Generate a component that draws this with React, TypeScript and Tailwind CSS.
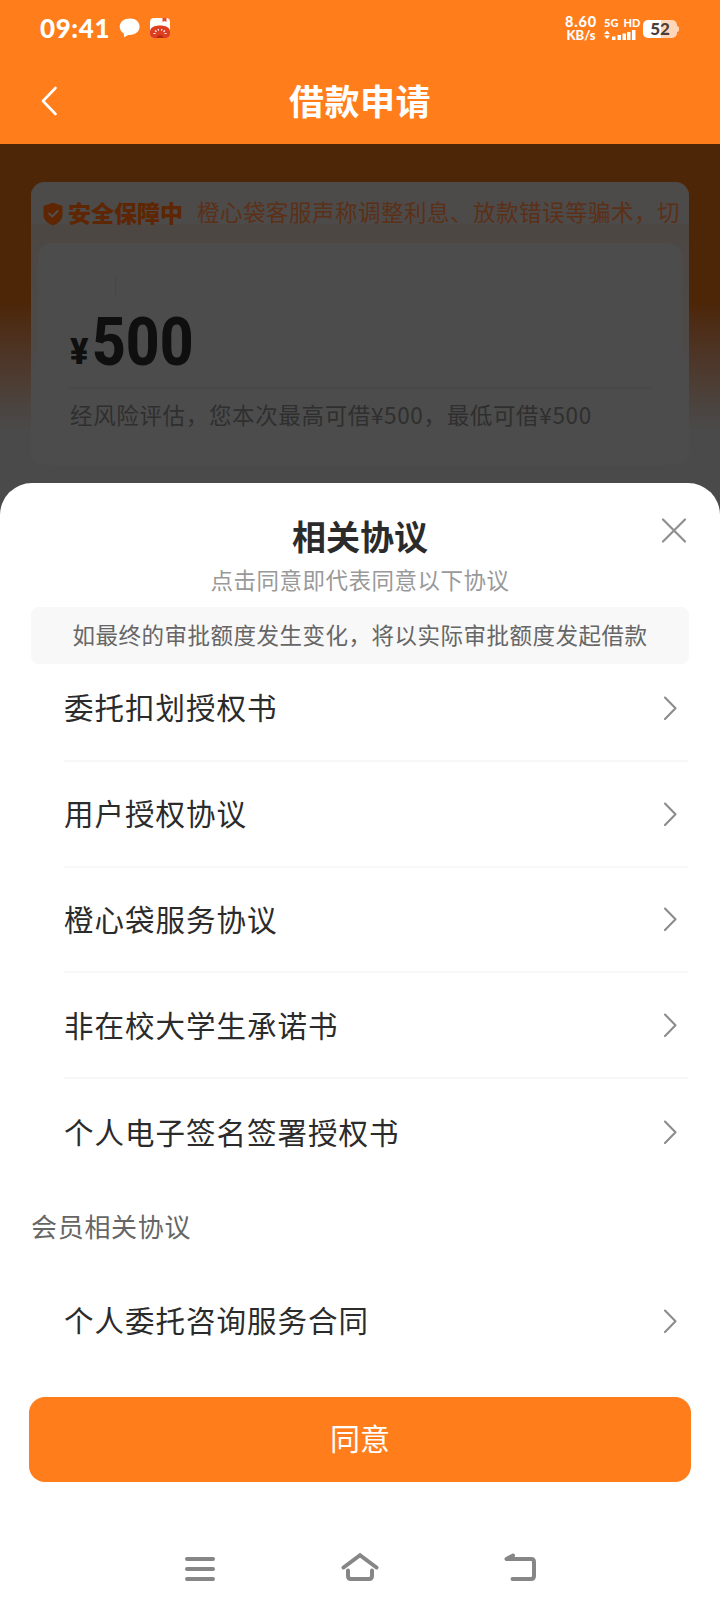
import React from "react";

const CJK = "font-['Noto_Sans_CJK_SC',sans-serif]";

function Chevron() {
  return (
    <svg className="h-6 w-4 shrink-0" viewBox="0 0 16 24" fill="none" stroke="#8c8c8c" strokeWidth="2.1" strokeLinecap="round" strokeLinejoin="round">
      <path d="M2 1.500 12.500 12.300 2 23" />
    </svg>
  );
}

function Row({ label, divider }: { label: string; divider?: boolean }) {
  return (
    <div className={`flex h-[105.8px] shrink-0 items-center justify-between pr-[9px] ${divider ? "border-b-2 border-[#f7f7f7]" : ""}`}>
      <span className="pb-[3px] text-[29.5px] leading-[44px] tracking-[1px] text-[#2b2b2b]">{label}</span>
      <Chevron />
    </div>
  );
}

function StatusBar() {
  return (
    <div className="flex h-14 items-center justify-between pl-[40px] pr-[41px] text-white">
      <div className="flex items-center">
        <span className="w-[79px] whitespace-nowrap font-['Lato',sans-serif] text-[26px] font-black leading-[30px] tracking-[0.6px]">09:41</span>
        <svg className="h-5 w-[22px]" viewBox="0 0 22 20" fill="#fff">
          <path d="M11 .5C5 .5.7 4 .7 8.700c0 3 1.700 5.300 4.200 6.700L5 19.300l4.300-2.400c6.500.6 11.300-3.200 11.300-8.200C20.600 4 16.800.5 11 .5Z" />
        </svg>
        <svg className="ml-[9px] h-5 w-5" viewBox="0 0 20 20">
          <rect width="20" height="20" rx="4" fill="#fff" />
          <path d="M12.500 0h4v4l-2-1-2 1Z" fill="#e64a2e" />
          <path d="M0 13.500C0 9.500 4.500 7.500 10 7.500s10 2 10 6V16a4 4 0 0 1-4 4H4a4 4 0 0 1-4-4Z" fill="#df3d20" />
          <path d="m5 12.500 1.500 1.200M8 11l.6 1.600M12 11l-.6 1.600M15 12.500l-1.500 1.200M3.500 15.500h2M16.500 15.500h-2" stroke="#fff" strokeWidth="1.200" fill="none" />
          <path d="M6 20q4-6 8 0Z" fill="#b92a12" />
        </svg>
      </div>
      <div className="flex items-center pt-[1px]">
        <div className="w-[34px] text-center font-['Lato',sans-serif] font-black">
          <div className="whitespace-nowrap text-[14.5px] leading-[14px] tracking-[0.8px]">8.60</div>
          <div className="whitespace-nowrap text-[13px] leading-[13px]">KB/s</div>
        </div>
        <div className="ml-[6px] w-8">
          <div className="whitespace-nowrap font-['Lato',sans-serif] text-[11px] font-black leading-[11px]">5G&nbsp; HD</div>
          <svg className="mt-px h-3 w-8" viewBox="0 0 32 12" fill="#fff">
            <path d="M0 5h6L3 1.500ZM0 6.500h6L3 10ZM8 7.500h3.500V11H8ZM13.500 6H17v5h-3.500ZM18.500 4.500H22V11h-3.500ZM23 3h3.500v8H23ZM28 1h3.500v10H28Z" />
          </svg>
        </div>
        <div className="ml-[7px] flex items-center">
          <div className="flex h-[18px] w-[34px] items-center justify-center rounded-[5px] bg-linear-to-r from-white from-52% to-[#ffd6b8] to-52%">
            <span className="font-['Lato',sans-serif] text-[17px] font-black leading-[18px] text-[#4a4038]">52</span>
          </div>
          <div className="h-[6px] w-[2px] rounded-r bg-[#ffd6b8]" />
        </div>
      </div>
    </div>
  );
}

function LoanCard() {
  return (
    <div className="h-[283px] overflow-hidden rounded-[14px] bg-linear-to-b from-[#4d4744] from-20% to-[#4c4c4c] to-75% px-[7px]">
      <div className="-mx-[7px] flex h-[42px] items-end bg-[#4d4a4a] pl-[12px]">
        <svg className="mb-[-2px] mr-[5px] h-6 w-5 shrink-0" viewBox="0 0 20 24" fill="none">
          <path d="M10 .8 19.500 4v8.500c0 5.500-4 8.800-9.500 11C4.500 21.300.5 18 .5 12.500V4Z" fill="#5e2602" />
          <path d="m5.500 11 3.700 3.500 6-6" stroke="#55504e" strokeWidth="1.800" />
        </svg>
        <span className="-mb-[5px] w-[129px] shrink-0 whitespace-nowrap text-[23px] font-black leading-[34px] text-[#5e2602]">安全保障中</span>
        <span className="-mb-[4px] whitespace-nowrap text-[22.500px] leading-[34px] tracking-[0.5px] text-[#5c3016]">橙心袋客服声称调整利息、放款错误等骗术，切</span>
      </div>
      <div className="mt-[19px] flex h-[222px] flex-col rounded-[14px] bg-[#4c4c4c] px-8">
        <div className="ml-[45px] mt-[33px] h-[22px] w-px bg-[#474747]" />
        <div className="mt-[9px] flex h-[82px] items-end border-b-2 border-[#484848] text-[#0f0f0f]">
          <span className="mb-[14px] w-[22px] font-['Roboto',sans-serif] text-[36px] font-black leading-[42px]">
            <span className="block origin-left scale-x-[0.95]">¥</span>
          </span>
          <span className="mb-[11px] origin-left scale-x-[0.890] font-['Roboto',sans-serif] text-[66px] font-extrabold leading-[66px]">500</span>
        </div>
        <p className="mt-[8px] whitespace-nowrap text-[22.500px] leading-[34px] tracking-[0.650px] text-[#2f2f2f]">经风险评估，您本次最高可借¥500，最低可借¥500</p>
      </div>
    </div>
  );
}

function Sheet() {
  const agreements = ["委托扣划授权书", "用户授权协议", "橙心袋服务协议", "非在校大学生承诺书", "个人电子签名签署授权书"];
  return (
    <section className="relative -mt-8 flex h-[1129px] flex-col rounded-t-[32px] bg-white">
      <h2 className="mt-[28px] text-center text-[34px] font-bold leading-[50px] text-[#2b2b2b]">相关协议</h2>
      <button aria-label="关闭" className="absolute right-[33px] top-[34px] h-[26px] w-[26px]">
        <svg className="h-full w-full" viewBox="0 0 26 26" fill="none" stroke="#8f8f8f" strokeWidth="2.200" strokeLinecap="round">
          <path d="m2 2.500 22 22M24 2.500 2 24.500" />
        </svg>
      </button>
      <p className="text-center text-[22.500px] leading-[36px] tracking-[0.500px] text-[#999]">点击同意即代表同意以下协议</p>
      <p className="mx-[31px] mt-[10px] h-[57px] rounded-[8px] bg-[#f8f8f8] text-center text-[22.500px] leading-[55px] tracking-[0.500px] text-[#666]">如最终的审批额度发生变化，将以实际审批额度发起借款</p>
      <div className="-mt-[8px] ml-16 mr-8">
        {agreements.map((name, i) => (
          <Row key={name} label={name} divider={i < agreements.length - 1} />
        ))}
      </div>
      <h3 className="ml-[31px] mt-[21px] text-[26px] leading-[40px] tracking-[0.700px] text-[#666]">会员相关协议</h3>
      <div className="ml-16 mr-8 mt-[22px]">
        <Row label="个人委托咨询服务合同" />
      </div>
      <button className="mx-[29px] mt-[23px] h-[85px] shrink-0 rounded-[16px] bg-[#ff7d1a] pb-[4px] text-[30px] leading-[81px] text-white">同意</button>
      <nav className="mt-[69px] flex h-8 items-start justify-center gap-[122px]">
        <svg className="h-8 w-[38px]" viewBox="0 0 38 32" stroke="#868686" strokeWidth="4" strokeLinecap="round">
          <path d="M6 8h26M6 18h26M6 28h26" />
        </svg>
        <svg className="h-8 w-[38px]" viewBox="0 0 38 32" fill="none" stroke="#868686" strokeWidth="4" strokeLinecap="round" strokeLinejoin="miter">
          <path d="M2.500 16.500 19 4.200l16.500 12.300M7 19.500V25q0 3 3 3h18q3 0 3-3v-5.500" />
        </svg>
        <svg className="h-8 w-[38px]" viewBox="0 0 38 32" fill="none" stroke="#868686" strokeWidth="4" strokeLinecap="round" strokeLinejoin="round">
          <path d="M12 4.500 5.500 8H30q3 0 3 3v14q0 3-3 3H11.500" />
        </svg>
      </nav>
    </section>
  );
}

export default function App() {
  return (
    <main className={`h-[1612px] w-[720px] overflow-hidden bg-white ${CJK}`}>
      <header className="h-36 bg-[#ff7d1a] text-white">
        <StatusBar />
        <div className="grid h-[88px] grid-cols-[80px_1fr_80px] items-center">
          <svg className="ml-[40px] mt-[2px] h-[30px] w-[18px]" viewBox="0 0 18 30" fill="none" stroke="#fff" strokeWidth="2.600" strokeLinecap="round" strokeLinejoin="round">
            <path d="M15.500 2 3 15l12.500 13" />
          </svg>
          <h1 className="text-center text-[35px] font-bold leading-[52px] tracking-[0.500px]">借款申请</h1>
        </div>
      </header>
      <div className="h-[371px] bg-linear-to-b from-[#4d2608] from-[160px] to-[#4a4a4a] to-[286px] px-[31px] pt-[38px]">
        <LoanCard />
      </div>
      <Sheet />
    </main>
  );
}
